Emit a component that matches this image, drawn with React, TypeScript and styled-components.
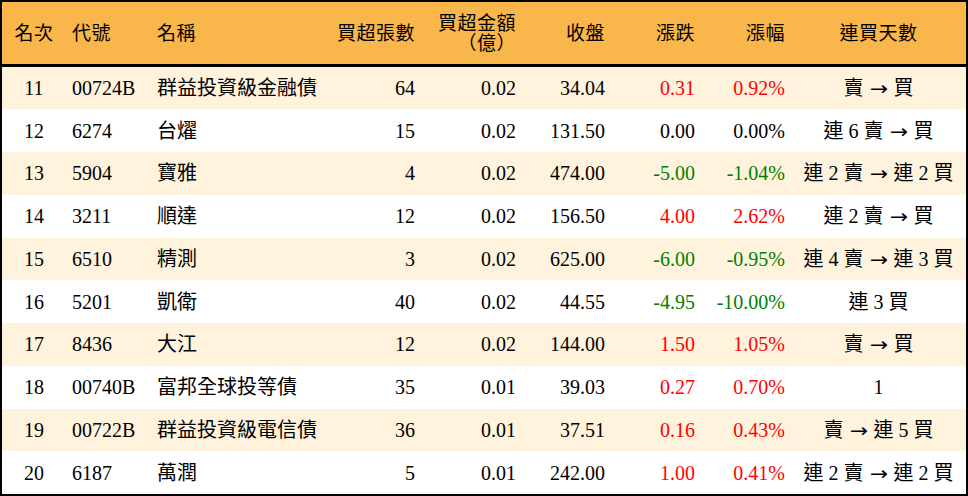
import React from 'react';
import styled, { createGlobalStyle } from 'styled-components';

type Trend = 'up' | 'down' | 'flat';

interface Row {
  rank: number;
  code: string;
  name: string;
  lots: number;
  amount: string;
  close: string;
  change: string;
  pct: string;
  sell: string; // 賣 side of the streak, '' when none
  buy: string;
}

const rows: Row[] = [
  { rank: 11, code: '00724B', name: '群益投資級金融債', lots: 64, amount: '0.02', close: '34.04', change: '0.31', pct: '0.92%', sell: '賣', buy: '買' },
  { rank: 12, code: '6274', name: '台燿', lots: 15, amount: '0.02', close: '131.50', change: '0.00', pct: '0.00%', sell: '連 6 賣', buy: '買' },
  { rank: 13, code: '5904', name: '寶雅', lots: 4, amount: '0.02', close: '474.00', change: '-5.00', pct: '-1.04%', sell: '連 2 賣', buy: '連 2 買' },
  { rank: 14, code: '3211', name: '順達', lots: 12, amount: '0.02', close: '156.50', change: '4.00', pct: '2.62%', sell: '連 2 賣', buy: '買' },
  { rank: 15, code: '6510', name: '精測', lots: 3, amount: '0.02', close: '625.00', change: '-6.00', pct: '-0.95%', sell: '連 4 賣', buy: '連 3 買' },
  { rank: 16, code: '5201', name: '凱衛', lots: 40, amount: '0.02', close: '44.55', change: '-4.95', pct: '-10.00%', sell: '', buy: '連 3 買' },
  { rank: 17, code: '8436', name: '大江', lots: 12, amount: '0.02', close: '144.00', change: '1.50', pct: '1.05%', sell: '賣', buy: '買' },
  { rank: 18, code: '00740B', name: '富邦全球投等債', lots: 35, amount: '0.01', close: '39.03', change: '0.27', pct: '0.70%', sell: '', buy: '1' },
  { rank: 19, code: '00722B', name: '群益投資級電信債', lots: 36, amount: '0.01', close: '37.51', change: '0.16', pct: '0.43%', sell: '賣', buy: '連 5 買' },
  { rank: 20, code: '6187', name: '萬潤', lots: 5, amount: '0.01', close: '242.00', change: '1.00', pct: '0.41%', sell: '連 2 賣', buy: '連 2 買' },
];

const trendOf = (v: string): Trend => {
  const n = parseFloat(v);
  if (n > 0) return 'up';
  if (n < 0) return 'down';
  return 'flat';
};

const trendColor = {
  up: '#ff0000',
  down: '#008000',
  flat: '#000000',
};

const App: React.FC = () => {
  return (
    <>
      <GlobalStyle />
      <Board>
        <HeaderRow>
          <HeadCell $align="center">名次</HeadCell>
          <HeadCell>代號</HeadCell>
          <HeadCell>名稱</HeadCell>
          <HeadCell $align="right">買超張數</HeadCell>
          <HeadCell $align="right">
            買超金額
            <br />
            （億）
          </HeadCell>
          <HeadCell $align="right">收盤</HeadCell>
          <HeadCell $align="right">漲跌</HeadCell>
          <HeadCell $align="right">漲幅</HeadCell>
          <HeadCell $align="center">連買天數</HeadCell>
        </HeaderRow>
        {rows.map((row, index) => {
          const trend = trendOf(row.change);
          return (
            <DataRow key={row.rank} $striped={index % 2 === 0}>
              <Cell $align="center">{row.rank}</Cell>
              <Cell>{row.code}</Cell>
              <Cell>{row.name}</Cell>
              <Cell $align="right">{row.lots}</Cell>
              <Cell $align="right">{row.amount}</Cell>
              <Cell $align="right">{row.close}</Cell>
              <Cell $align="right" $trend={trend}>{row.change}</Cell>
              <Cell $align="right" $trend={trend}>{row.pct}</Cell>
              <Cell $align="center">
                {row.sell && (
                  <>
                    {row.sell} <Arrow>→</Arrow>{' '}
                  </>
                )}
                {row.buy}
              </Cell>
            </DataRow>
          );
        })}
      </Board>
    </>
  );
};

const GlobalStyle = createGlobalStyle`
  html, body {
    margin: 0;
    padding: 0;
    background: #ffffff;
  }
  body {
    font-family: "Liberation Serif", "Noto Sans CJK TC", serif;
  }
`;

const Board = styled.div`
  width: 968px;
  height: 496px;
  box-sizing: border-box;
  border: 2px solid #000;
  background: #fff;
  display: flex;
  flex-direction: column;
`;

const columns = '64px 85px 179px 91px 101px 89px 90px 90px 1fr';

const HeaderRow = styled.div`
  display: grid;
  grid-template-columns: ${columns};
  height: 59px;
  background-color: #f9b64a;
  border-bottom: 3px solid #000;
  align-items: center;
  padding-top: 3px;
`;

const HeadCell = styled.div<{ $align?: 'left' | 'right' | 'center' }>`
  padding: 0 6px;
  font-size: 19px;
  line-height: 20px;
  color: #000;
  text-align: ${p => p.$align || 'left'};
  white-space: nowrap;
  letter-spacing: 0.5px;
`;

const DataRow = styled.div<{ $striped: boolean }>`
  display: grid;
  grid-template-columns: ${columns};
  height: 43px;
  align-items: center;
  background-color: ${p => (p.$striped ? '#fff3dd' : '#ffffff')};
`;

const Cell = styled.div<{ $align?: 'left' | 'right' | 'center'; $trend?: Trend }>`
  padding: 0 6px;
  font-size: 20px;
  line-height: 24px;
  color: ${p => (p.$trend ? trendColor[p.$trend] : '#000')};
  text-align: ${p => p.$align || 'left'};
  white-space: nowrap;
`;

const Arrow = styled.span`
  display: inline-block;
  margin: 0 2px;
  font-family: "DejaVu Sans", sans-serif;
  font-size: 19px;
  transform: scaleX(1.15);
`;

export default App;
